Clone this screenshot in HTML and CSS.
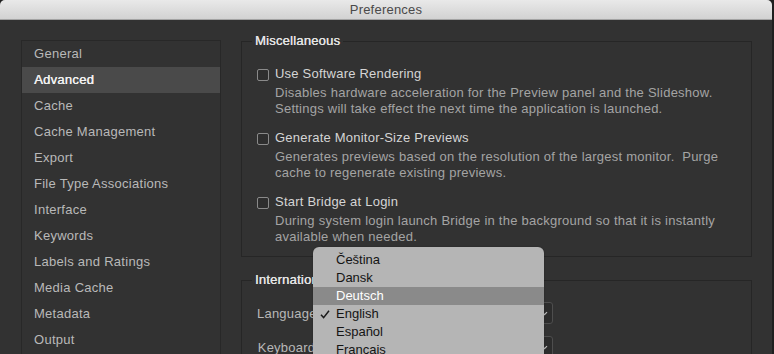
FILE: index.html
```html
<!DOCTYPE html>
<html lang="en">
<head>
<meta charset="utf-8">
<title>Preferences</title>
<link rel="stylesheet" href="styles.css">
</head>
<body>
<div class="window">
  <div class="titlebar">Preferences</div>
  <div class="content">
    <ul class="sidebar">
      <li>General</li>
      <li class="active">Advanced</li>
      <li>Cache</li>
      <li>Cache Management</li>
      <li>Export</li>
      <li>File Type Associations</li>
      <li>Interface</li>
      <li>Keywords</li>
      <li>Labels and Ratings</li>
      <li>Media Cache</li>
      <li>Metadata</li>
      <li>Output</li>
      <li>Startup Scripts</li>
    </ul>
    <div class="main">
      <fieldset class="group misc">
        <legend>Miscellaneous</legend>
        <div class="option">
          <span class="checkbox"></span>
          <div class="opt-text">
            <div class="opt-label">Use Software Rendering</div>
            <div class="opt-desc">Disables hardware acceleration for the Preview panel and the Slideshow.<br>Settings will take effect the next time the application is launched.</div>
          </div>
        </div>
        <div class="option">
          <span class="checkbox"></span>
          <div class="opt-text">
            <div class="opt-label">Generate Monitor-Size Previews</div>
            <div class="opt-desc">Generates previews based on the resolution of the largest monitor.&nbsp; Purge<br>cache to regenerate existing previews.</div>
          </div>
        </div>
        <div class="option">
          <span class="checkbox"></span>
          <div class="opt-text">
            <div class="opt-label">Start Bridge at Login</div>
            <div class="opt-desc">During system login launch Bridge in the background so that it is instantly<br>available when needed.</div>
          </div>
        </div>
      </fieldset>
      <fieldset class="group intl">
        <legend>Internationalization</legend>
        <div class="field-row">
          <label class="field-label">Language:</label>
          <div class="select">English<svg class="chev" width="7" height="5" viewBox="0 0 7 5"><path d="M1 1.2 L3.5 3.7 L6 1.2" fill="none" stroke="#bdbdbd" stroke-width="1.2"/></svg></div>
        </div>
        <div class="field-row">
          <label class="field-label">Keyboard:</label>
          <div class="select">English<svg class="chev" width="7" height="5" viewBox="0 0 7 5"><path d="M1 1.2 L3.5 3.7 L6 1.2" fill="none" stroke="#bdbdbd" stroke-width="1.2"/></svg></div>
        </div>
      </fieldset>
    </div>
  </div>
  <ul class="menu">
    <li class="menu-item">Čeština</li>
    <li class="menu-item">Dansk</li>
    <li class="menu-item hl">Deutsch</li>
    <li class="menu-item checked"><svg class="tick" width="10" height="9" viewBox="0 0 10 9"><path d="M1 4.8 L3.6 7.6 L9 0.8" fill="none" stroke="#1a1a1a" stroke-width="1.5"/></svg>English</li>
    <li class="menu-item">Español</li>
    <li class="menu-item">Français</li>
    <li class="menu-item">Italiano</li>
  </ul>
</div>
</body>
</html>
```
FILE: styles.css
```css
* { box-sizing: border-box; }
html, body { margin: 0; padding: 0; }
body {
  background: #1f1f1f;
  width: 774px;
  height: 354px;
  overflow: hidden;
  font-family: "Liberation Sans", Arial, sans-serif;
  font-size: 13px;
  letter-spacing: 0.22px;
}
.window {
  position: relative;
  width: 772px;
  height: 354px;
  background: #323232;
  border-top-left-radius: 5px;
  border-top-right-radius: 5px;
  overflow: hidden;
  display: flex;
  flex-direction: column;
}
.titlebar {
  flex: 0 0 20px;
  height: 20px;
  line-height: 19px;
  text-align: center;
  color: #4a4a4a;
  font-size: 13px;
  background: linear-gradient(#e9e9e9, #d2d2d2);
  border-bottom: 1px solid #a3a3a3;
}
.content {
  flex: 1;
  display: flex;
  align-items: flex-start;
  padding: 13px 20px 0 21px;
  gap: 20px;
}
.sidebar {
  list-style: none;
  margin: 7px 0 0 0;
  padding: 0;
  width: 200px;
  flex: 0 0 200px;
  border: 1px solid #282828;
  border-bottom: none;
  height: 320px;
}
.sidebar li {
  height: 26px;
  line-height: 26px;
  padding-left: 12px;
  color: #b9b9b9;
  letter-spacing: 0.27px;
}
.sidebar li.active {
  background: #4a4a4a;
  color: #f2f2f2;
  text-shadow: 0.4px 0 0 #f2f2f2;
}
.main {
  flex: 1;
  display: flex;
  flex-direction: column;
}
.group {
  margin: 0;
  border: 1px solid #262626;
  padding: 17px 15px 11px 15px;
  min-width: 0;
}
.group legend {
  line-height: 16px;
  padding: 0 3px;
  margin-left: -5px;
  color: #e4e4e4;
  font-size: 13px;
  text-shadow: 0.2px 0 0 #e4e4e4;
}
.intl {
  margin-top: 15px;
  padding-top: 14px;
  height: 120px;
}
.option {
  display: flex;
  align-items: flex-start;
  gap: 6px;
}
.option + .option { margin-top: 13px; }
.checkbox {
  flex: 0 0 12px;
  width: 12px;
  height: 12px;
  margin-top: 3px;
  border: 1px solid #8a8a8a;
  border-radius: 2px;
  background: #2e2e2e;
}
.opt-label {
  line-height: 16px;
  color: #d5d5d5;
}
.opt-desc {
  margin-top: 3px;
  line-height: 16px;
  color: #a4a4a4;
  letter-spacing: 0.25px;
}
.field-row {
  display: flex;
  align-items: center;
  gap: 8px;
  height: 22px;
}
.field-row + .field-row { margin-top: 12px; }
.field-label {
  width: 62px;
  color: #b8b8b8;
  text-align: right;
}
.select {
  position: relative;
  width: 226px;
  height: 22px;
  line-height: 20px;
  padding-left: 8px;
  border: 1px solid #4e4e4e;
  border-radius: 3px;
  background: #2c2c2c;
  color: #d0d0d0;
}
.chev {
  position: absolute;
  right: 4px;
  top: 8px;
}
.menu {
  position: absolute;
  left: 313px;
  top: 247px;
  width: 231px;
  height: 140px;
  margin: 0;
  padding: 4px 0 0 0;
  list-style: none;
  background: #b5b5b5;
  border-radius: 6px 6px 0 0;
  box-shadow: 0 0 2px rgba(0,0,0,0.25);
  letter-spacing: 0;
}
.menu-item {
  position: relative;
  height: 18px;
  line-height: 18px;
  padding-left: 23px;
  color: #141414;
}
.menu-item.hl {
  background: #8a8a8a;
  color: #ffffff;
}
.tick {
  position: absolute;
  left: 7px;
  top: 5px;
}
```
